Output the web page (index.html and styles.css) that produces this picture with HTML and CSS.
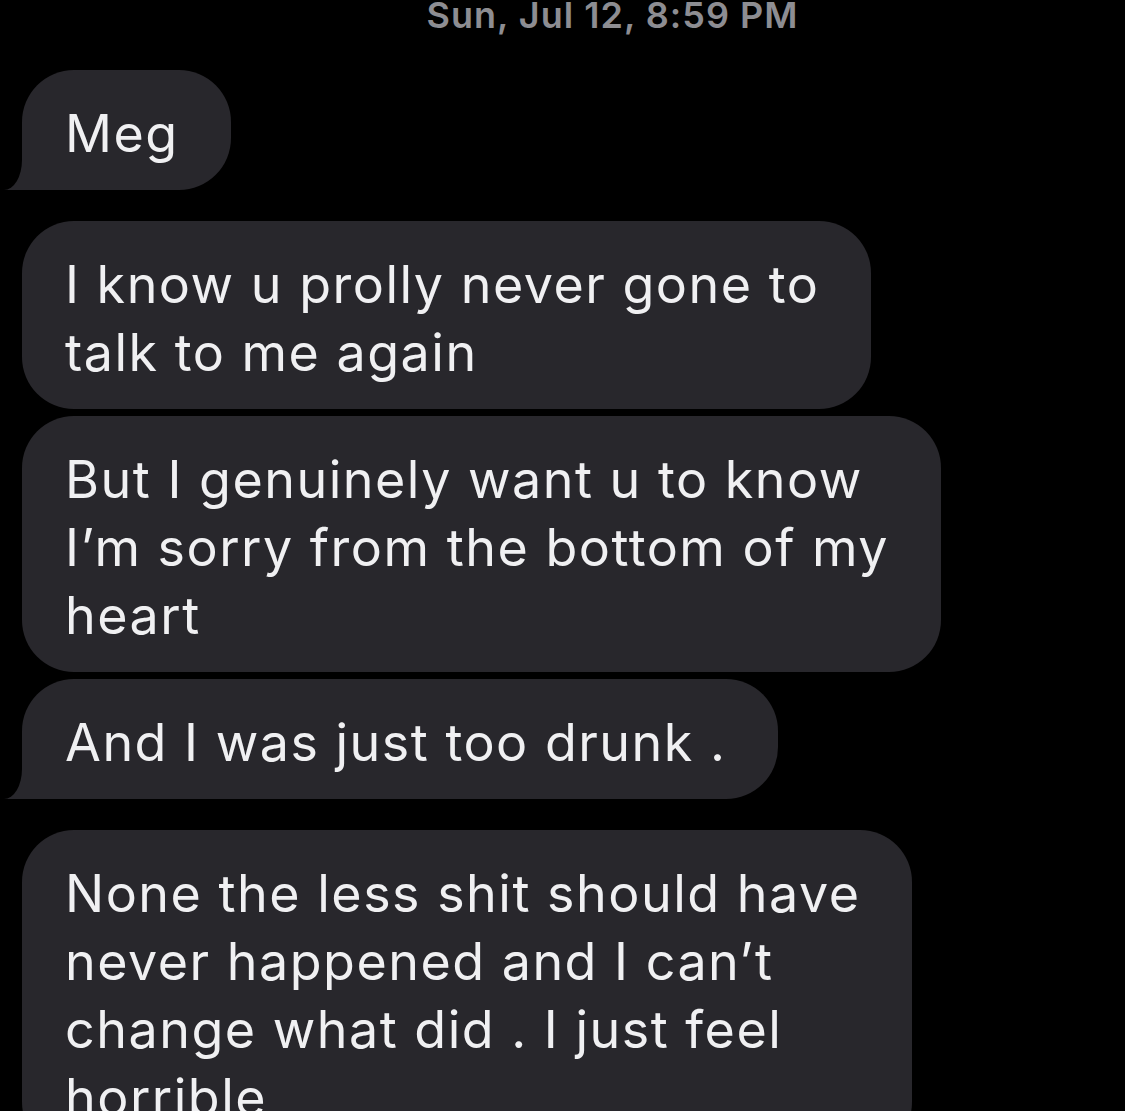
FILE: index.html
```html
<!DOCTYPE html>
<html lang="en">
<head>
  <meta charset="UTF-8" />
  <meta name="viewport" content="width=device-width, initial-scale=1.0" />
  <title>Messages</title>
  <link rel="stylesheet" href="styles.css">
</head>
<body>
  <div class="thread">
    <!-- Timestamp -->
    <div class="stamp">Sun, Jul 12, 8:59 PM</div>

    <!-- Incoming messages -->
    <div class="group">
      <div class="bubble tail">Meg</div>
    </div>

    <div class="group">
      <div class="bubble">I know u prolly never gone to<br>talk to me again</div>
      <div class="bubble">But I genuinely want u to know<br>I’m sorry from the bottom of my<br>heart</div>
      <div class="bubble tail">And I was just too drunk .</div>
    </div>

    <div class="group">
      <div class="bubble">None the less shit should have<br>never happened and I can’t<br>change what did . I just feel<br>horrible</div>
    </div>
  </div>
</body>
</html>
```

FILE: styles.css
```css
/* Basic Reset */
* {
  margin: 0;
  padding: 0;
  box-sizing: border-box;
}
/* Global Styles */
body {
  font-family: "Inter", "Liberation Sans", sans-serif;
  background: #000;
  color: #f0f0f2;
  height: 1111px;
  overflow: hidden;
}
/* Thread */
.thread {
  padding-left: 22px;
}
.stamp {
  margin-top: -5px;
  padding-left: 78px;
  text-align: center;
  font-size: 36px;
  font-weight: 600;
  line-height: 40px;
  letter-spacing: 1px;
  color: #8d8d92;
  margin-bottom: 35px;
}
/* Message groups */
.group {
  display: flex;
  flex-direction: column;
  align-items: flex-start;
  gap: 7px;
  margin-bottom: 31px;
}
/* Bubbles */
.bubble {
  position: relative;
  z-index: 0;
  background: #28272c;
  border-radius: 52px;
  padding: 30px 52px 22px 43px;
  font-size: 52px;
  line-height: 68px;
  letter-spacing: 1.5px;
  white-space: nowrap;
}
.bubble.tail::before {
  content: "";
  position: absolute;
  z-index: -1;
  left: -18px;
  bottom: 0;
  width: 80px;
  height: 60px;
  background: #28272c;
}
.bubble.tail::after {
  content: "";
  position: absolute;
  z-index: -1;
  left: -40px;
  bottom: 0;
  width: 40px;
  height: 62px;
  background: #000;
  border-bottom-right-radius: 18px 30px;
}
```
